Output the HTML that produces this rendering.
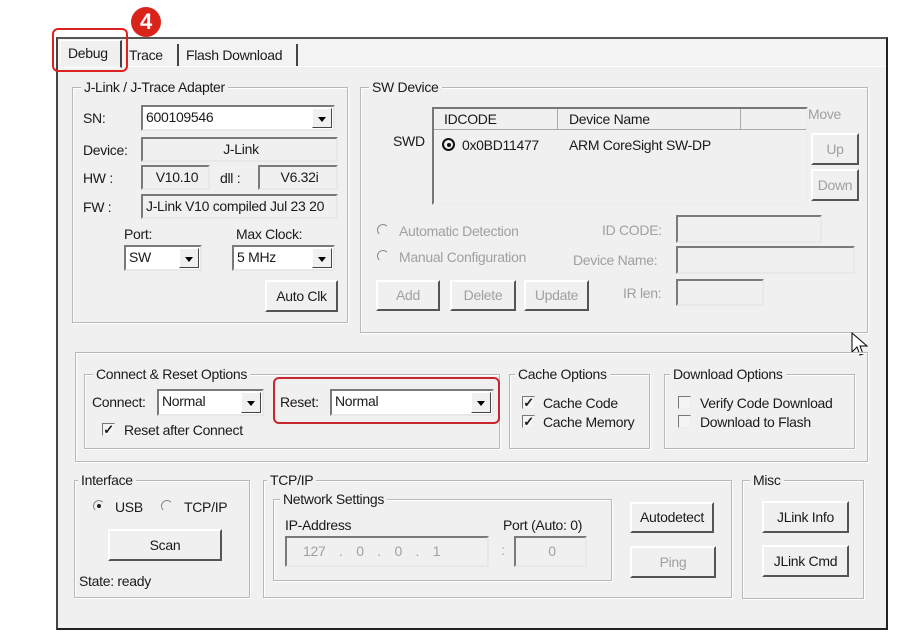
<!DOCTYPE html>
<html><head><meta charset="utf-8">
<style>
*{box-sizing:border-box;margin:0;padding:0}
body{width:922px;height:637px;background:#fff;position:relative;overflow:hidden;font-family:"Liberation Sans",Arial,sans-serif;font-size:14px;color:#1a1a1a;letter-spacing:-0.3px}
.a{position:absolute}
.dlg{left:56px;top:37px;width:832px;height:593px;background:#f0f0f0;border:2px solid #222;border-left-color:#444;border-top-color:#555}
.g{position:absolute;border:1px solid #b8b8b8;box-shadow:inset 1px 1px 0 #fff,1px 1px 0 #fff}
.g>.t{position:absolute;top:-10px;left:8px;background:#f0f0f0;padding:0 3px;white-space:nowrap;line-height:18px}
.f{position:absolute;background:#f0f0f0;border:2px solid;border-color:#7a7a7a #e8e8e8 #e8e8e8 #7a7a7a;line-height:20px;padding-left:3px;white-space:nowrap;overflow:hidden}
.w{background:#fff}
.cb .ar{position:absolute;right:1px;top:1px;bottom:1px;width:20px;background:#f0f0f0;border:1px solid;border-color:#fff #444 #444 #fff}
.cb .ar:after{content:"";position:absolute;left:5px;top:8px;border:4px solid transparent;border-top:5px solid #000}
.b{position:absolute;background:#f0f0f0;border:2px solid;border-color:#fff #555 #555 #fff;text-align:center;white-space:nowrap}
.dis{color:#a0a0a0}
.l{position:absolute;white-space:nowrap;line-height:18px}
.ck{position:absolute;width:13px;height:13px;border:1px solid;border-color:#777 #eee #eee #777;background:#f4f4f4;font-size:13px;line-height:11px;text-align:center;font-weight:bold}
.rd{position:absolute;width:12px;height:12px;border-radius:50%;border:1px solid #888;border-color:#888 #eee #eee #888}
</style></head><body>
<div class="a dlg"></div>
<div class="a" style="left:58px;top:39px;width:828px;height:28px;background:#f3f3f3;border-bottom:1px solid #fff"></div>
<!-- tabs -->
<div class="a" style="left:60px;top:40px;width:62px;height:28px;background:#f0f0f0;border:1px solid #fff;border-right:2px solid #444"></div>
<div class="l" style="left:68px;top:44px">Debug</div>
<div class="l" style="left:129px;top:46px">Trace</div>
<div class="a" style="left:177px;top:44px;width:2px;height:22px;background:#444"></div>
<div class="l" style="left:186px;top:46px">Flash Download</div>
<div class="a" style="left:296px;top:44px;width:2px;height:22px;background:#444"></div>
<div class="a" style="left:52px;top:28px;width:76px;height:44px;border:2px solid #d22;border-radius:6px"></div>
<div class="a" style="left:131px;top:7px;width:30px;height:30px;border-radius:50%;background:#d9241c;color:#fff;font-weight:bold;font-size:22px;text-align:center;line-height:30px">4</div>

<!-- J-Link group -->
<div class="g" style="left:72px;top:87px;width:276px;height:236px"><span class="t">J-Link / J-Trace Adapter</span></div>
<div class="l" style="left:83px;top:109px">SN:</div>
<div class="f w cb" style="left:141px;top:105px;width:194px;height:26px">600109546<div class="ar"></div></div>
<div class="l" style="left:83px;top:141px">Device:</div>
<div class="f" style="left:141px;top:137px;width:197px;height:25px;text-align:center">J-Link</div>
<div class="l" style="left:83px;top:169px">HW :</div>
<div class="f" style="left:141px;top:165px;width:69px;height:25px;text-align:center">V10.10</div>
<div class="l" style="left:220px;top:169px">dll :</div>
<div class="f" style="left:258px;top:165px;width:80px;height:25px;text-align:center">V6.32i</div>
<div class="l" style="left:83px;top:198px">FW :</div>
<div class="f" style="left:141px;top:194px;width:197px;height:25px">J-Link V10 compiled Jul 23 20</div>
<div class="l" style="left:124px;top:225px">Port:</div>
<div class="l" style="left:236px;top:225px">Max Clock:</div>
<div class="f w cb" style="left:124px;top:245px;width:78px;height:26px">SW<div class="ar"></div></div>
<div class="f w cb" style="left:232px;top:245px;width:103px;height:26px">5 MHz<div class="ar"></div></div>
<div class="b" style="left:265px;top:280px;width:73px;height:32px;line-height:28px">Auto Clk</div>

<!-- SW Device -->
<div class="g" style="left:360px;top:87px;width:508px;height:246px"><span class="t">SW Device</span></div>
<div class="l" style="left:393px;top:132px">SWD</div>
<div class="a" style="left:432px;top:107px;width:376px;height:98px;background:#f0f0f0;border:2px solid;border-color:#777 #eee #eee #777"></div>
<div class="a" style="left:434px;top:109px;width:372px;height:21px;border-bottom:1px solid #aaa"></div>
<div class="a" style="left:557px;top:109px;width:1px;height:21px;background:#aaa"></div>
<div class="a" style="left:740px;top:109px;width:1px;height:21px;background:#aaa"></div>
<div class="l" style="left:444px;top:110px">IDCODE</div>
<div class="l" style="left:569px;top:110px">Device Name</div>
<div class="a" style="left:442px;top:138px;width:13px;height:13px;border-radius:50%;border:2px solid #111"><div class="a" style="left:2.5px;top:2.5px;width:4px;height:4px;background:#111;border-radius:50%"></div></div>
<div class="l" style="left:462px;top:136px">0x0BD11477</div>
<div class="l" style="left:569px;top:136px">ARM CoreSight SW-DP</div>
<div class="l dis" style="left:808px;top:105px">Move</div>
<div class="b dis" style="left:811px;top:133px;width:48px;height:32px;line-height:28px">Up</div>
<div class="b dis" style="left:811px;top:169px;width:48px;height:32px;line-height:28px">Down</div>
<div class="rd" style="left:377px;top:224px"></div>
<div class="l dis" style="left:399px;top:222px">Automatic Detection</div>
<div class="rd" style="left:377px;top:250px"></div>
<div class="l dis" style="left:399px;top:248px">Manual Configuration</div>
<div class="l dis" style="left:602px;top:221px">ID CODE:</div>
<div class="f" style="left:676px;top:215px;width:146px;height:28px"></div>
<div class="l dis" style="left:573px;top:251px">Device Name:</div>
<div class="f" style="left:676px;top:246px;width:179px;height:28px"></div>
<div class="l dis" style="left:623px;top:284px">IR len:</div>
<div class="f" style="left:676px;top:279px;width:88px;height:27px"></div>
<div class="b dis" style="left:376px;top:280px;width:64px;height:31px;line-height:27px">Add</div>
<div class="b dis" style="left:450px;top:280px;width:66px;height:31px;line-height:27px">Delete</div>
<div class="b dis" style="left:524px;top:280px;width:65px;height:31px;line-height:27px">Update</div>

<!-- cursor -->
<svg class="a" style="left:851px;top:332px" width="20" height="26" viewBox="0 0 20 26"><path d="M1 1 L1 20 L6 15 L9 23 L12 22 L9 14 L16 14 Z" fill="#fff" stroke="#000" stroke-width="1"/></svg>

<!-- options frame -->
<div class="g" style="left:75px;top:352px;width:793px;height:110px"></div>
<div class="g" style="left:84px;top:374px;width:416px;height:75px"><span class="t">Connect &amp; Reset Options</span></div>
<div class="l" style="left:92px;top:393px">Connect:</div>
<div class="f w cb" style="left:157px;top:389px;width:107px;height:27px">Normal<div class="ar"></div></div>
<div class="l" style="left:280px;top:393px">Reset:</div>
<div class="f w cb" style="left:330px;top:389px;width:164px;height:27px">Normal<div class="ar"></div></div>
<div class="a" style="left:273px;top:377px;width:227px;height:47px;border:2px solid #c8262c;border-radius:6px"></div>
<div class="ck" style="left:102px;top:423px">✓</div>
<div class="l" style="left:124px;top:421px">Reset after Connect</div>
<div class="g" style="left:509px;top:374px;width:141px;height:75px"><span class="t" style="left:5px">Cache Options</span></div>
<div class="ck" style="left:522px;top:396px">✓</div>
<div class="l" style="left:543px;top:394px">Cache Code</div>
<div class="ck" style="left:522px;top:415px">✓</div>
<div class="l" style="left:543px;top:413px">Cache Memory</div>
<div class="g" style="left:664px;top:374px;width:191px;height:75px"><span class="t" style="left:5px">Download Options</span></div>
<div class="ck" style="left:678px;top:396px"></div>
<div class="l" style="left:700px;top:394px">Verify Code Download</div>
<div class="ck" style="left:678px;top:415px"></div>
<div class="l" style="left:700px;top:413px">Download to Flash</div>

<!-- interface -->
<div class="g" style="left:74px;top:480px;width:176px;height:118px"><span class="t" style="left:3px">Interface</span></div>
<div class="rd" style="left:93px;top:500px"><div class="a" style="left:3px;top:3px;width:4px;height:4px;background:#222;border-radius:50%"></div></div>
<div class="l" style="left:115px;top:498px">USB</div>
<div class="rd" style="left:161px;top:500px"></div>
<div class="l" style="left:184px;top:498px">TCP/IP</div>
<div class="b" style="left:108px;top:529px;width:114px;height:32px;line-height:28px">Scan</div>
<div class="l" style="left:79px;top:572px">State: ready</div>

<div class="g" style="left:263px;top:480px;width:469px;height:118px"><span class="t" style="left:3px">TCP/IP</span></div>
<div class="g" style="left:273px;top:499px;width:339px;height:82px"><span class="t" style="left:6px">Network Settings</span></div>
<div class="l" style="left:285px;top:516px">IP-Address</div>
<div class="l" style="left:503px;top:516px">Port (Auto: 0)</div>
<div class="f dis" style="left:285px;top:536px;width:204px;height:31px;line-height:26px;padding-left:16px;word-spacing:10px">127 . 0 . 0 . 1</div>
<div class="l dis" style="left:501px;top:541px">:</div>
<div class="f dis" style="left:514px;top:536px;width:73px;height:31px;line-height:26px;text-align:center">0</div>
<div class="b" style="left:630px;top:502px;width:84px;height:31px;line-height:27px">Autodetect</div>
<div class="b dis" style="left:630px;top:546px;width:86px;height:32px;line-height:28px">Ping</div>

<div class="g" style="left:742px;top:480px;width:122px;height:119px"><span class="t" style="left:7px">Misc</span></div>
<div class="b" style="left:762px;top:501px;width:87px;height:32px;line-height:28px">JLink Info</div>
<div class="b" style="left:762px;top:545px;width:87px;height:32px;line-height:28px">JLink Cmd</div>
</body></html>
